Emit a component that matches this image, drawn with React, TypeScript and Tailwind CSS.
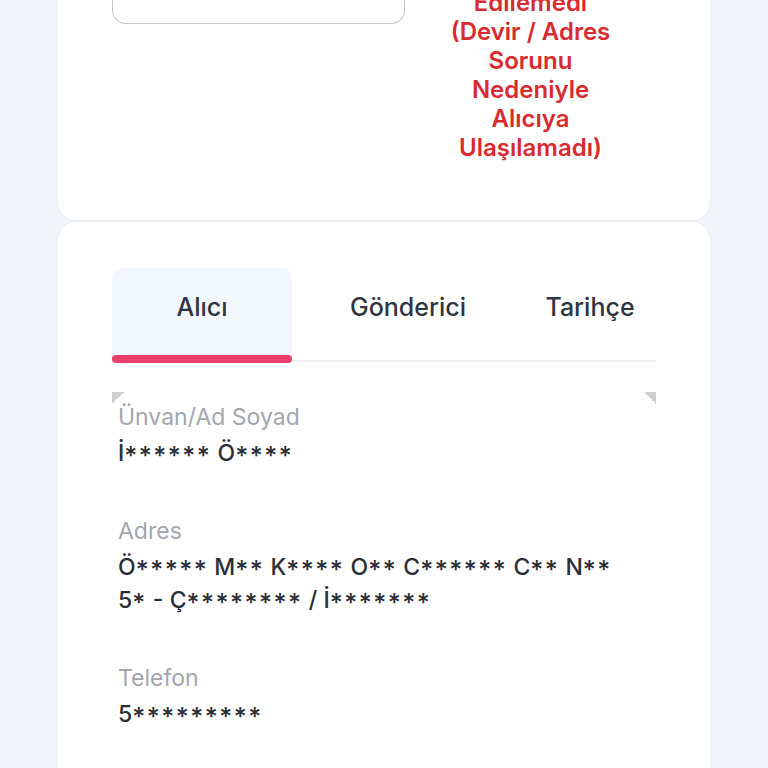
import React from "react";

const redLines = [
  "Edilemedi",
  "(Devir / Adres",
  "Sorunu",
  "Nedeniyle",
  "Alıcıya",
  "Ulaşılamadı)",
];

function Masked({ text }: { text: string }) {
  const parts = text.split(/(\*+)/).filter((p) => p.length > 0);
  return (
    <>
      {parts.map((p, i) =>
        p.startsWith("*") ? (
          <span key={i} className="relative top-[4px] text-[25px] leading-none tracking-[1.5px]">
            {p}
          </span>
        ) : (
          <span key={i}>{p}</span>
        )
      )}
    </>
  );
}

function Field({ label, lines }: { label: string; lines: string[] }) {
  return (
    <div className="flex flex-col">
      <div className="text-[23px] leading-[33px] text-[#a3a6ae]">{label}</div>
      <div className="mt-[3px] text-[23px] leading-[33px] font-medium text-[#2b2e36]">
        {lines.map((l, i) => (
          <div key={i} className="whitespace-nowrap h-[33px]">
            <Masked text={l} />
          </div>
        ))}
      </div>
    </div>
  );
}

export default function App() {
  return (
    <div className="min-h-screen bg-[#f1f5f9] px-[58px] overflow-hidden" style={{ fontFamily: "Inter, sans-serif" }}>
      <div className="-mt-[12px] bg-white rounded-b-[18px] shadow-[0_1px_3px_rgba(15,23,42,0.04)] px-[54px] pb-[58px] flex items-start">
        <div className="w-[293px] h-[36px] border-[1.5px] border-t-0 border-[#c7c7c9] rounded-b-[14px]" />
        <div className="flex-1 flex flex-col items-center text-center text-[24px] leading-[29px] font-semibold text-[#d92a2f]">
          {redLines.map((l) => (
            <div key={l} className="whitespace-nowrap">{l}</div>
          ))}
        </div>
      </div>

      <div className="mt-[2px] bg-white rounded-t-[18px] shadow-[0_-1px_3px_rgba(15,23,42,0.04)] px-[54px] pt-[46px] pb-[80px]">
        <div className="flex text-[25px] font-medium text-[#2f3542]">
          <div className="w-[180px] flex flex-col bg-[#f1f7fd] rounded-t-[10px]">
            <div className="h-[87px] flex items-center justify-center pb-[8px]">Alıcı</div>
            <div className="h-[8px] rounded-full bg-[#ea3f6c]" />
          </div>
          <div className="w-[232px] flex flex-col">
            <div className="h-[92px] flex items-center justify-center pb-[13px]">Gönderici</div>
            <div className="h-[2px] bg-[#eef0f3]" />
          </div>
          <div className="w-[132px] flex flex-col">
            <div className="h-[92px] flex items-center justify-center pb-[13px]">Tarihçe</div>
            <div className="h-[2px] bg-[#eef0f3]" />
          </div>
        </div>

        <div className="relative mt-[29px] pt-[9px] px-[6px] flex flex-col gap-[45px]">
          <div className="absolute left-0 top-0 w-[12px] h-[12px] bg-[linear-gradient(135deg,#cfcfd1_50%,transparent_50%)]" />
          <div className="absolute right-0 top-0 w-[12px] h-[12px] bg-[linear-gradient(225deg,#cfcfd1_50%,transparent_50%)]" />
          <Field label="Ünvan/Ad Soyad" lines={["İ****** Ö****"]} />
          <Field label="Adres" lines={["Ö***** M** K**** O** C****** C** N**", "5* - Ç******** / İ*******"]} />
          <Field label="Telefon" lines={["5*********"]} />
        </div>
      </div>
    </div>
  );
}
